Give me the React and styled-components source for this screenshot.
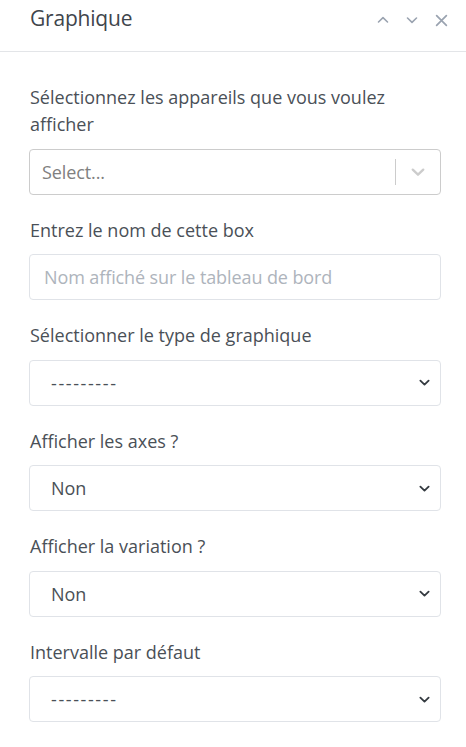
import React from 'react';
import styled, { createGlobalStyle } from 'styled-components';

const GlobalStyle = createGlobalStyle`
  html, body {
    margin: 0;
    padding: 0;
    background: #ffffff;
  }
  body {
    font-family: 'Open Sans', 'Noto Sans', sans-serif;
  }
`;

const Panel = styled.div`
  width: 466px;
  background: #ffffff;
  color: #495057;
`;

const Header = styled.header`
  display: flex;
  align-items: center;
  justify-content: space-between;
  height: 36px;
  padding: 0 18px 15px 30px;
  border-bottom: 1px solid #e3e5e8;
  h2 {
    margin: 0;
    font-size: 21px;
    font-weight: 400;
    color: #3f454c;
    letter-spacing: -0.2px;
  }
`;

const Tools = styled.div`
  display: flex;
  align-items: center;
  gap: 17px;
  margin-top: 4px;
  svg {
    display: block;
    color: #9aa3b0;
  }
`;

const Body = styled.div`
  padding: 32px 25px 20px 29px;
`;

const Field = styled.div`
  display: flex;
  flex-direction: column;
  margin-bottom: 22px;
`;

const Label = styled.label`
  font-size: 18px;
  line-height: 27px;
  color: #4a5057;
  margin-bottom: 10.5px;
  padding-left: 1px;
`;

const Control = styled.div`
  position: relative;
  height: 46px;
  box-sizing: border-box;
  border: 1px solid ${p => (p.$react ? '#cccccc' : '#e0e3e8')};
  border-radius: 4px;
  display: flex;
  align-items: center;
  font-size: 18px;
`;

const Value = styled.span`
  flex: 1;
  padding-left: ${p => p.$pad}px;
  color: ${p => p.$color};
  letter-spacing: ${p => (p.$dashes ? '1.6px' : '-0.1px')};
`;

const Separator = styled.span`
  width: 1px;
  align-self: stretch;
  margin: 9px 0;
  background: #cccccc;
`;

const Indicator = styled.span`
  width: 44px;
  display: flex;
  justify-content: center;
  svg {
    display: block;
  }
`;

const Caret = styled.span`
  padding-right: 10px;
  display: flex;
  svg {
    display: block;
  }
`;

const ChevronDown = ({ size = 12, color = 'currentColor', width = 1.8 }) => (
  <svg width={size} height={size} viewBox="0 0 12 12" fill="none">
    <path d="M1.5 4 L6 8.3 L10.5 4" stroke={color} strokeWidth={width} strokeLinecap="round" strokeLinejoin="round" />
  </svg>
);

const ChevronUp = ({ size = 12, color = 'currentColor' }) => (
  <svg width={size} height={size} viewBox="0 0 12 12" fill="none">
    <path d="M1.5 8 L6 3.7 L10.5 8" stroke={color} strokeWidth="1.6" strokeLinecap="round" strokeLinejoin="round" />
  </svg>
);

const Close = () => (
  <svg width="13" height="13" viewBox="0 0 12 12" fill="none">
    <path d="M1.5 1.5 L10.5 10.5 M10.5 1.5 L1.5 10.5" stroke="currentColor" strokeWidth="1.6" strokeLinecap="round" />
  </svg>
);

const NativeSelect = ({ value }) => (
  <Control>
    <Value $pad={21} $color="#4a5057" $dashes={value.startsWith('-')}>
      {value}
    </Value>
    <Caret>
      <ChevronDown size={11} color="#343a40" width={2} />
    </Caret>
  </Control>
);

const fields = [
  { label: 'Sélectionner le type de graphique', value: '---------' },
  { label: 'Afficher les axes ?', value: 'Non' },
  { label: 'Afficher la variation ?', value: 'Non' },
  { label: 'Intervalle par défaut', value: '---------' },
];

export default function App() {
  return (
    <>
      <GlobalStyle />
      <Panel>
        <Header>
          <h2>Graphique</h2>
          <Tools>
            <ChevronUp />
            <ChevronDown width={1.6} />
            <Close />
          </Tools>
        </Header>
        <Body>
          <Field>
            <Label>Sélectionnez les appareils que vous voulez afficher</Label>
            <Control $react>
              <Value $pad={12} $color="#808080">Select...</Value>
              <Separator />
              <Indicator>
                <ChevronDown size={14} color="#cccccc" width={2} />
              </Indicator>
            </Control>
          </Field>
          <Field>
            <Label>Entrez le nom de cette box</Label>
            <Control>
              <Value $pad={14} $color="#aeb4bc">Nom affiché sur le tableau de bord</Value>
            </Control>
          </Field>
          {fields.map(f => (
            <Field key={f.label}>
              <Label>{f.label}</Label>
              <NativeSelect value={f.value} />
            </Field>
          ))}
        </Body>
      </Panel>
    </>
  );
}
